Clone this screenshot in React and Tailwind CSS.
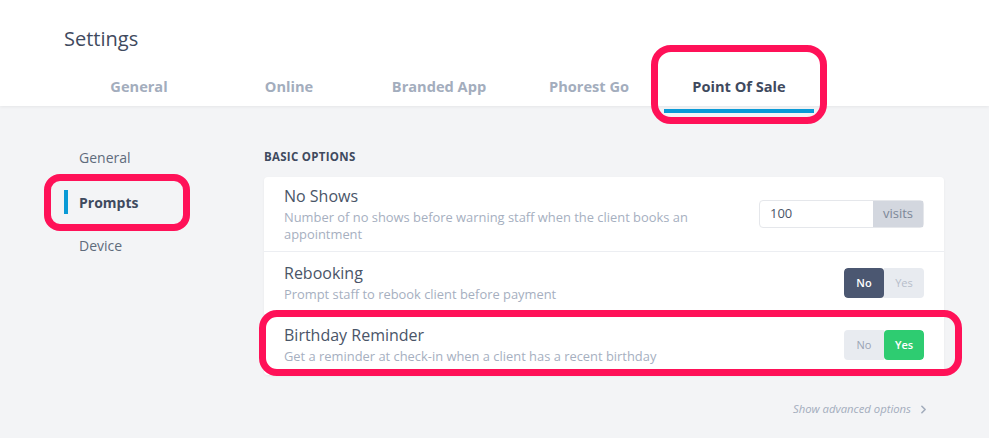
import { ChevronRight } from "lucide-react";

const tabs = ["General", "Online", "Branded App", "Phorest Go", "Point Of Sale"];

const Toggle = ({ value }) => (
  <div className="flex h-[30px] rounded overflow-hidden text-[11px]">
    <div
      className={
        value
          ? "w-10 flex items-center justify-center bg-[#e8ebf0] text-[#9aa4b5]"
          : "w-10 flex items-center justify-center bg-[#4b5771] text-white font-semibold rounded shadow-md"
      }
    >
      No
    </div>
    <div
      className={
        value
          ? "w-10 flex items-center justify-center bg-[#2ecc71] text-white font-semibold rounded"
          : "w-10 flex items-center justify-center bg-[#e8ebf0] text-[#b6bdca]"
      }
    >
      Yes
    </div>
  </div>
);

const Row = ({ title, desc, children, className }) => (
  <div className={"flex items-center justify-between px-5 " + className}>
    <div className="max-w-[430px]">
      <div className="text-[16px] font-medium text-[#4a5568] leading-5">{title}</div>
      <div className="text-[12.9px] text-[#a6afbf] leading-[17px] mt-[3px]">{desc}</div>
    </div>
    {children}
  </div>
);

export default function App() {
  return (
    <div className="relative w-[989px] h-[438px] bg-[#f3f4f6] overflow-hidden font-['Open_Sans',sans-serif]">
      {/* Header */}
      <header className="bg-white h-[106px] shadow-[0_1px_3px_rgba(0,0,0,0.06)] pl-16 pt-[27px]">
        <h1 className="text-[20px] text-[#3f4a5e] leading-6">Settings</h1>
        <nav className="flex mt-[25px]">
          {tabs.map((t) => (
            <div key={t} className="w-[150px] flex flex-col items-center">
              <span
                className={
                  "text-[14.6px] font-bold leading-5 pb-[13px] " +
                  (t === "Point Of Sale" ? "text-[#3f4a5e]" : "text-[#a3adbd]")
                }
              >
                {t}
              </span>
              <div className={"h-1 w-full " + (t === "Point Of Sale" ? "bg-[#0a9ad6]" : "")} />
            </div>
          ))}
        </nav>
      </header>

      <div className="flex pl-16 pt-[42px]">
        {/* Side nav */}
        <aside className="w-[200px] flex flex-col text-[14px] text-[#5f6b7c]">
          <div className="pl-[15px] h-5 leading-5">General</div>
          <div className="flex items-center mt-[22px] h-6">
            <div className="w-1 h-6 bg-[#0a9ad6]" />
            <span className="pl-[11px] font-bold text-[#3f4a5e]">Prompts</span>
          </div>
          <div className="pl-[15px] mt-[22px] leading-5">Device</div>
        </aside>

        {/* Main */}
        <main className="w-[680px]">
          <h2 className="text-[11.5px] font-bold text-[#3f4a5e] tracking-wide leading-4 mt-[1px]">BASIC OPTIONS</h2>
          <div className="mt-[12px] bg-white rounded shadow-[0_1px_3px_rgba(0,0,0,0.05)]">
            <Row
              className="h-[75px] border-b border-[#eceef2]"
              title="No Shows"
              desc="Number of no shows before warning staff when the client books an appointment"
            >
              <div className="flex h-[28px] border border-[#e5e7eb] rounded text-[13px]">
                <div className="w-[113px] pl-[10px] flex items-center text-[#4a5568]">100</div>
                <div className="w-[50px] bg-[#d3d7df] flex items-center justify-center text-[#7d8798]">
                  visits
                </div>
              </div>
            </Row>
            <Row
              className="h-[63px] border-b border-[#eceef2]"
              title="Rebooking"
              desc="Prompt staff to rebook client before payment"
            >
              <Toggle value={false} />
            </Row>
            <Row
              className="h-[60px]"
              title="Birthday Reminder"
              desc="Get a reminder at check-in when a client has a recent birthday"
            >
              <Toggle value={true} />
            </Row>
          </div>
          <div className="flex justify-end items-center mt-[26px] pr-[14px] text-[11.3px] italic text-[#a3adbd]">
            Show advanced options
            <ChevronRight size={13} strokeWidth={3} className="ml-[6px] text-[#a3adbd]" />
          </div>
        </main>
      </div>

      {/* Annotation highlights */}
      <div className="absolute left-[651px] top-[45px] w-[176px] h-[79px] border-[7px] border-[#ff1158] rounded-[20px]" />
      <div className="absolute left-[44px] top-[174px] w-[146px] h-[57px] border-[7px] border-[#ff1158] rounded-[16px]" />
      <div className="absolute left-[259px] top-[310px] w-[703px] h-[66px] border-[7px] border-[#ff1158] rounded-[18px]" />
    </div>
  );
}
